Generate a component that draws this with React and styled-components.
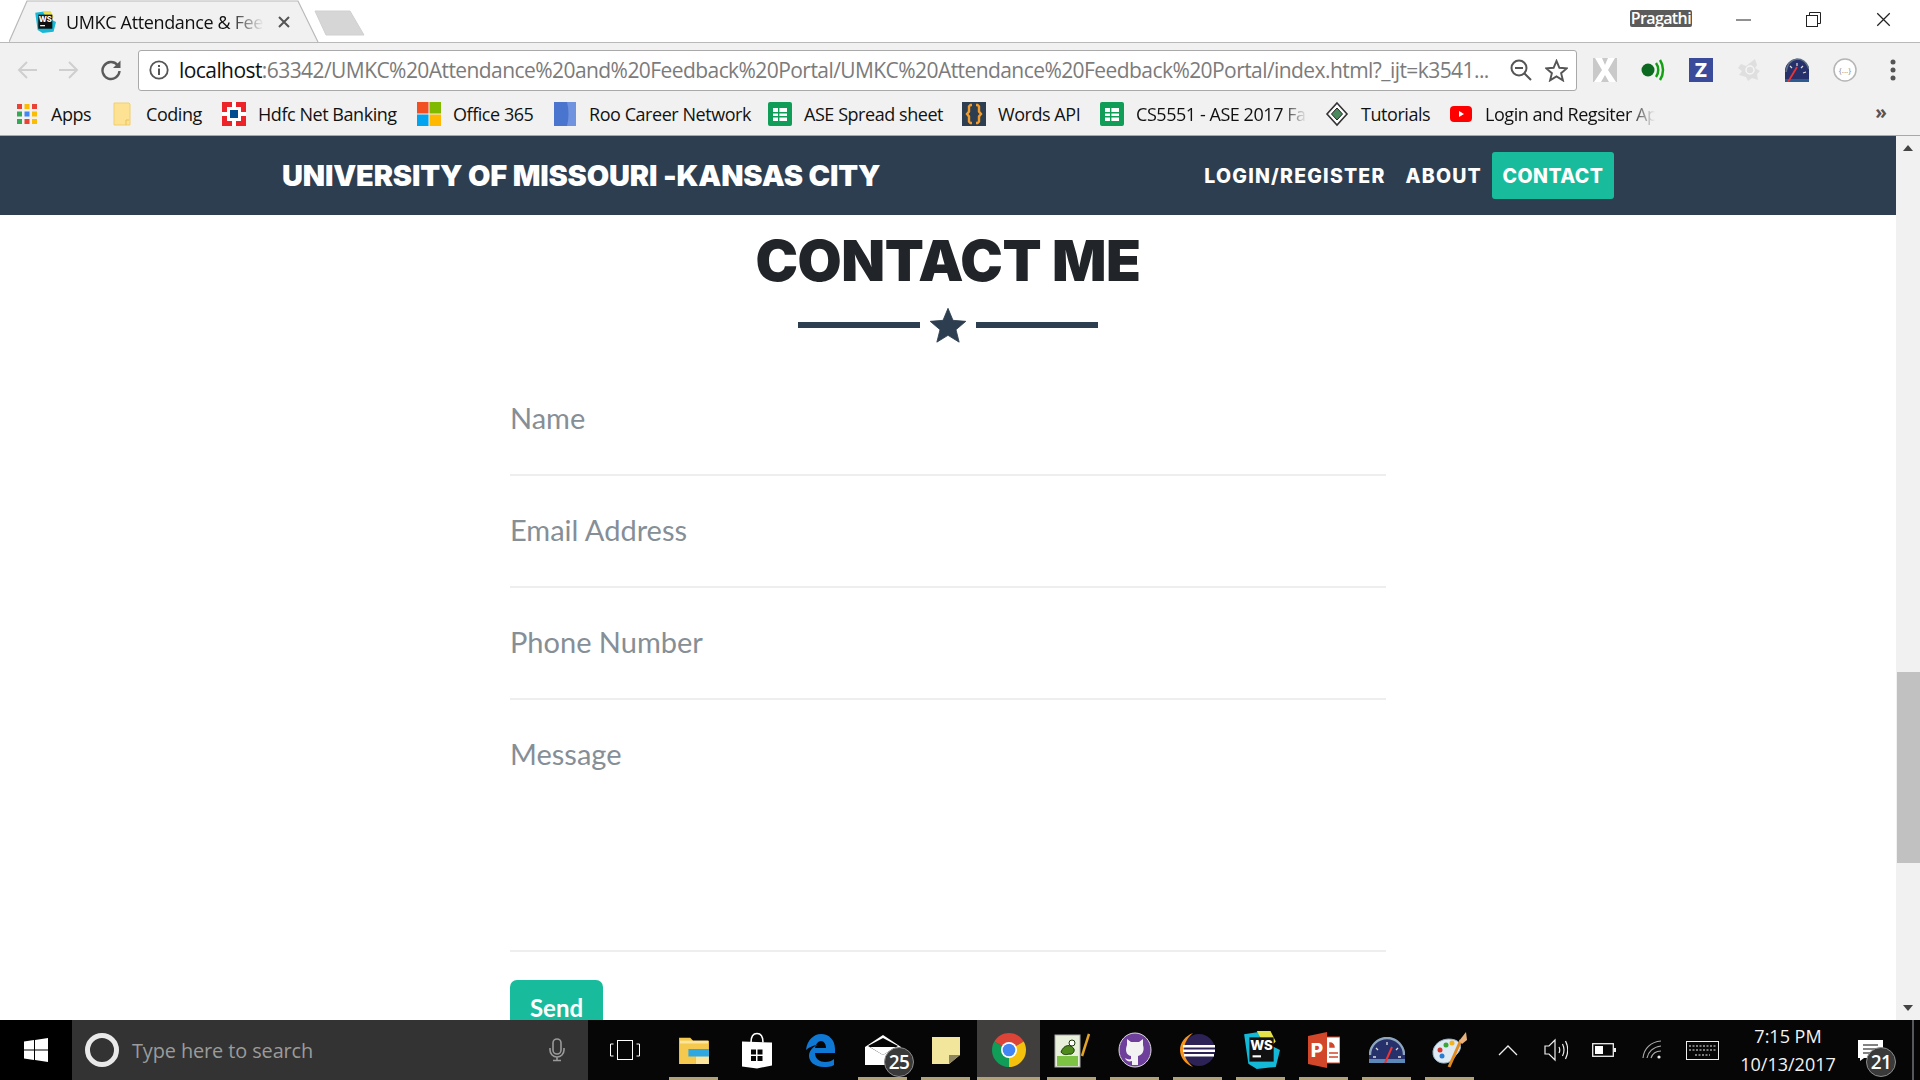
import React from "react";
import styled, { createGlobalStyle } from "styled-components";

const Global = createGlobalStyle`
  html, body { margin: 0; padding: 0; height: 100%; overflow: hidden; background: #fff; }
  * { box-sizing: border-box; }
`;

const UI = `"Open Sans", "Noto Sans", sans-serif`;
const HEAD = `Inter, "Liberation Sans", sans-serif`;
const BODY = `Lato, "Open Sans", sans-serif`;

const Page = styled.div`
  width: 1920px; height: 1080px; display: flex; flex-direction: column; overflow: hidden;
  font-family: ${UI};
`;

/* ---- title / tab strip ---- */
const TabStrip = styled.div`
  height: 43px; flex: none; display: flex; align-items: flex-start; background: #fff;
  border-bottom: 1px solid #b9b9b9; position: relative;
`;
const Tab = styled.div`
  position: relative; width: 310px; height: 43px; margin-left: 9px; flex: none;
  display: flex; align-items: center; padding: 0 0 0 25px;
`;
const TabShape = styled.svg`
  position: absolute; left: 0; top: 0; width: 310px; height: 43px;
`;
const TabIcon = styled.span`
  position: relative; display: flex; margin-right: 10px;
`;
const TabTitle = styled.span`
  position: relative; font-size: 18px; letter-spacing: -0.35px; color: #111; width: 198px;
  white-space: nowrap; overflow: hidden;
  -webkit-mask-image: linear-gradient(to right, #000 82%, transparent 100%);
  mask-image: linear-gradient(to right, #000 82%, transparent 100%);
`;
const TabClose = styled.span`
  position: relative; display: flex; margin-left: 14px;
`;
const NewTab = styled.svg`
  width: 52px; height: 26px; margin: 10px 0 0 -5px; flex: none;
`;
const StripSpace = styled.div` flex: 1; `;
const Profile = styled.span`
  margin-top: 10px; height: 17px; line-height: 17px; padding: 0 1px; font-size: 16px; letter-spacing: -0.6px;
  color: #fff; background: #5b5b5b; border-radius: 2px; font-weight: 600;
`;
const WinButtons = styled.div`
  display: flex; margin-left: 44px; padding-top: 12px; padding-right: 29px; gap: 55px;
`;

/* ---- toolbar ---- */
const Toolbar = styled.div`
  height: 50px; flex: none; background: #f1f1f1; display: flex; align-items: center;
  padding: 4px 0 0 0;
`;
const NavIcons = styled.div`
  width: 138px; flex: none; display: flex; align-items: center; padding-left: 16px; gap: 20px;
`;
const Omnibox = styled.div`
  width: 1439px; height: 41px; flex: none; background: #fff; border: 1px solid #a9a9a9; border-radius: 3px;
  display: flex; align-items: center; padding: 0 8px 0 10px;
`;
const Url = styled.div`
  flex: 1; margin-left: 10px; font-size: 21px; letter-spacing: -0.57px; white-space: nowrap; overflow: hidden; color: #7b7b7b;
  b { font-weight: 400; color: #111; }
`;
const OmniActions = styled.div` display: flex; align-items: center; gap: 13px; `;
const Extensions = styled.div`
  flex: 1; display: flex; align-items: center; padding-left: 16px; gap: 24px;
`;
const KebabSlot = styled.span` display: flex; margin-left: 9px; `;

/* ---- bookmarks ---- */
const Bookmarks = styled.div`
  height: 43px; flex: none; background: #f1f1f1; display: flex; align-items: center; padding-left: 15px;
  border-bottom: 1px solid #a8a8a8;
`;
const Bookmark = styled.div`
  width: ${(p) => p.$w}px; flex: none; display: flex; align-items: center; gap: 12px;
  font-size: 18px; letter-spacing: -0.45px; color: #111; white-space: nowrap;
`;
const BookmarkIcon = styled.span`
  width: 24px; height: 24px; flex: none; display: flex; align-items: center; justify-content: center;
`;
const BookmarkText = styled.span`
  ${(p) => p.$fade && `
    width: ${p.$fade}px; overflow: hidden;
    -webkit-mask-image: linear-gradient(to right, #000 85%, transparent 100%);
    mask-image: linear-gradient(to right, #000 85%, transparent 100%);
  `}
`;
const More = styled.span`
  margin-left: auto; margin-right: 33px; font-size: 19px; line-height: 1; color: #555; font-weight: 700; margin-top: -3px;
`;

/* ---- viewport ---- */
const Viewport = styled.div` flex: 1; min-height: 0; display: flex; `;
const Site = styled.div` flex: 1; min-width: 0; overflow: hidden; display: flex; flex-direction: column; `;
const Navbar = styled.nav`
  height: 79px; flex: none; background: #2c3e50; display: flex; justify-content: center;
`;
const NavInner = styled.div`
  width: 1332px; display: flex; align-items: center; justify-content: space-between;
`;
const Brand = styled.span`
  font-family: ${HEAD}; font-weight: 900; font-size: 29px; letter-spacing: -0.17px; color: #fff; white-space: nowrap;
`;
const NavLinks = styled.div` display: flex; align-items: center; `;
const NavLink = styled.a`
  font-family: ${HEAD}; font-weight: 800; font-size: 19.5px; letter-spacing: 1.2px; color: #fff; white-space: nowrap;
  margin-left: ${(p) => p.$ml || 0}px;
  ${(p) => p.$active && `
    background: #18bc9c; height: 47px; width: 122px; border-radius: 3px; letter-spacing: 0.45px;
    display: flex; align-items: center; justify-content: center;
  `}
`;
const Section = styled.main`
  flex: 1; min-height: 0; display: flex; flex-direction: column; align-items: center; background: #fff;
`;
const Heading = styled.h2`
  margin: 0; padding-top: 12px; font-family: ${HEAD}; font-weight: 900; font-size: 57px; line-height: 68px; letter-spacing: -0.45px; color: #212529;
  white-space: nowrap;
`;
const Divider = styled.div`
  margin-top: 12px; height: 36px; display: flex; align-items: center; gap: 8px; flex: none;
`;
const DividerLine = styled.span`
  width: 122px; height: 6px; background: #2c3e50; display: block;
`;
const Form = styled.form` width: 876px; flex: none; margin-top: 21px; `;
const Field = styled.div`
  height: ${(p) => p.$h}px; border-bottom: 2px solid #eeeeee; padding-top: 36px;
`;
const FieldLabel = styled.label`
  display: block; font-family: ${BODY}; font-size: 29px; line-height: 36px; color: #868e96;
`;
const SendButton = styled.button`
  margin-top: 28px; width: 93px; height: 60px; border: 0; border-radius: 7px; background: #18bc9c; color: #fff;
  font-family: ${BODY}; font-weight: 700; font-size: 24px; display: block; padding: 0 0 5px;
`;

const Scrollbar = styled.div`
  width: 24px; flex: none; background: #f1f1f1; display: flex; flex-direction: column; align-items: stretch;
`;
const ScrollArrow = styled.div`
  height: 24px; flex: none; display: flex; align-items: center; justify-content: center;
`;
const ScrollTrack = styled.div` flex: 1; padding: 512px 0 0 1px; `;
const ScrollThumb = styled.div` width: 23px; height: 191px; background: #c1c1c1; `;

/* ---- taskbar ---- */
const Taskbar = styled.div`
  height: 60px; flex: none; background: #060606; display: flex; align-items: stretch; color: #fff;
`;
const StartButton = styled.div`
  width: 72px; flex: none; display: flex; align-items: center; justify-content: center; background: #000;
`;
const SearchBox = styled.div`
  width: 516px; flex: none; background: #333333; display: flex; align-items: center; padding: 0 22px 0 12px;
`;
const SearchText = styled.span`
  flex: 1; margin-left: 12px; font-size: 19.9px; letter-spacing: -0.1px; color: #9b9b9b; white-space: nowrap;
`;
const TaskView = styled.div`
  width: 74px; flex: none; display: flex; align-items: center; justify-content: center;
`;
const Apps = styled.div` display: flex; flex: none; `;
const AppButton = styled.div`
  position: relative; width: 63px; flex: none; display: flex; align-items: center; justify-content: center;
  background: ${(p) => (p.$active ? "#413f3d" : "transparent")};
  ${(p) => p.$open && `
    &::after {
      content: ""; position: absolute; bottom: 0; height: 3px; background: #b1a27a;
      left: ${p.$active ? 0 : 7}px; right: ${p.$active ? 0 : 7}px;
    }
  `}
`;
const Badge = styled.span`
  position: absolute; left: ${(p) => p.$l}px; top: 27px; width: 30px; height: 30px; border-radius: 50%;
  background: #3a3a3a; border: 1px solid #8c8c8c; color: #fff; font-size: 19px; font-weight: 600;
  display: flex; align-items: center; justify-content: center; letter-spacing: -0.5px;
`;
const Tray = styled.div`
  flex: 1; display: flex; align-items: center; padding-left: 3px;
`;
const TrayIcon = styled.div`
  width: ${(p) => p.$w}px; flex: none; display: flex; align-items: center; justify-content: center;
`;
const Clock = styled.div`
  width: 120px; flex: none; text-align: center; font-size: 18px; line-height: 28px; color: #f3f3f3; white-space: nowrap;
`;
const Notify = styled.div`
  position: relative; flex: 1; height: 100%; display: flex; align-items: center; padding-left: 10px;
`;
const DesktopEdge = styled.div` width: 2px; flex: none; background: #55585a; margin: 0 6px; `;

/* ---- icons ---- */
const Apps9 = () => (
  <svg width="20" height="20" viewBox="0 0 20 20">
    {[["#ea4335","#fbbc05","#ea4335"],["#34a853","#4285f4","#fbbc05"],["#34a853","#ea4335","#fbbc05"]].map((row, y) =>
      row.map((c, x) => <rect key={`${x}${y}`} x={x * 7.5} y={y * 7.5} width="5" height="5" fill={c} />))}
  </svg>
);
const Folder = () => (
  <svg width="18" height="24" viewBox="0 0 18 24">
    <path d="M1 1h15l1 1v21H1z" fill="#fde293" stroke="#f0cf6e" />
    <path d="M13 23v-5h3" fill="none" stroke="#e5c25d" />
  </svg>
);
const Hdfc = () => (
  <svg width="24" height="24" viewBox="0 0 24 24">
    <rect width="24" height="24" fill="#ed232a" />
    <rect x="5" y="5" width="14" height="14" fill="#fff" />
    <rect x="8" y="8" width="8" height="8" fill="#004c8f" />
    <path d="M10 0h4v5h-4zM10 19h4v5h-4zM0 10h5v4H0zM19 10h5v4h-5z" fill="#fff" />
  </svg>
);
const Office = () => (
  <svg width="24" height="24" viewBox="0 0 24 24">
    <rect width="11.5" height="11.5" fill="#f25022" />
    <rect x="12.5" width="11.5" height="11.5" fill="#7fba00" />
    <rect y="12.5" width="11.5" height="11.5" fill="#00a4ef" />
    <rect x="12.5" y="12.5" width="11.5" height="11.5" fill="#ffb900" />
  </svg>
);
const Roo = () => (
  <svg width="22" height="24" viewBox="0 0 22 24">
    <rect width="22" height="24" fill="#4a75cf" />
    <path d="M13 0h9v24h-9c2-8 2-16 0-24z" fill="#6f93de" />
  </svg>
);
const Sheet = () => (
  <svg width="24" height="24" viewBox="0 0 24 24">
    <rect width="24" height="24" rx="2" fill="#0f9d58" />
    <rect x="5" y="6" width="14" height="13" fill="#fff" />
    <path d="M5 10h14v1.4H5zM5 14h14v1.4H5zM10 6h1.4v13H10z" fill="#0f9d58" />
  </svg>
);
const Braces = () => (
  <svg width="24" height="24" viewBox="0 0 24 24">
    <rect width="24" height="24" fill="#2c3e50" />
    <path d="M10 3H8.5L7 4.5v5L5 12l2 2.500v5L8.500 21H10M14 3h1.500L17 4.500v5l2 2.500-2 2.500v5L15.500 21H14" fill="none" stroke="#f39c2b" strokeWidth="2.400" />
  </svg>
);
const Diamond = () => (
  <svg width="24" height="26" viewBox="0 0 24 26">
    <path d="M12 2l10 11-10 11L2 13z" fill="#fff" stroke="#333" strokeWidth="1.600" />
    <path d="M12 7l5.500 6-5.500 6-5.500-6z" fill="#4a8a5c" stroke="#222" />
  </svg>
);
const Youtube = () => (
  <svg width="22" height="16" viewBox="0 0 22 16">
    <rect width="22" height="16" rx="4" fill="#f00" />
    <path d="M9 5l5 3-5 3z" fill="#fff" />
  </svg>
);
const WsLogo = ({ s = 22 }) => (
  <svg width={s} height={s} viewBox="0 0 36 36">
    <path d="M2 3l20-3 6 4-4 8 12 6-4 16-18 2-8-5z" fill="#13b9d6" />
    <path d="M14 0h13l5 10-8 8z" fill="#e6e04a" />
    <rect x="7" y="6" width="23" height="23" fill="#111" />
    <text x="18.500" y="18" textAnchor="middle" fontSize="12.500" fontWeight="800" fill="#fff" fontFamily="Inter, sans-serif">WS</text>
    <rect x="10" y="23" width="8" height="2" fill="#fff" />
  </svg>
);
const Close = ({ s = 12, c = "#555", w = 2 }) => (
  <svg width={s} height={s} viewBox="0 0 12 12"><path d="M1 1l10 10M11 1L1 11" stroke={c} strokeWidth={w} fill="none" /></svg>
);
const ArrowSvg = styled.svg`
  transform: ${(p) => (p.$right ? "scaleX(-1)" : "none")};
`;
const Arrow = ({ right }) => (
  <ArrowSvg $right={right} width="22" height="20" viewBox="0 0 22 20">
    <path d="M21 10H3M11 2l-8 8 8 8" fill="none" stroke="#cfcfcf" strokeWidth="2" />
  </ArrowSvg>
);
const Reload = () => (
  <svg width="22" height="22" viewBox="0 0 22 22">
    <path d="M17.500 6A8.500 8.500 0 1 0 19.500 12" fill="none" stroke="#5a5a5a" strokeWidth="2.400" />
    <path d="M20.500 1.500v7.500H13z" fill="#5a5a5a" />
  </svg>
);
const Info = () => (
  <svg width="20" height="20" viewBox="0 0 20 20">
    <circle cx="10" cy="10" r="8.700" fill="none" stroke="#555" strokeWidth="1.800" />
    <rect x="9" y="8.500" width="2" height="6.500" fill="#555" />
    <rect x="9" y="5" width="2" height="2" fill="#555" />
  </svg>
);
const ZoomOut = () => (
  <svg width="22" height="22" viewBox="0 0 22 22">
    <circle cx="9" cy="9" r="7.500" fill="none" stroke="#555" strokeWidth="2" />
    <path d="M5 9h8M14.500 14.500l6.500 6.500" stroke="#555" strokeWidth="2" fill="none" />
  </svg>
);
const Star = ({ s = 23, fill = "none", stroke = "#555", sw = 2 }) => (
  <svg width={s} height={s} viewBox="0 0 24 24">
    <path d="M12 2l3 7.200 7.700.6-5.900 5 1.900 7.500L12 18.200 5.300 22.300l1.900-7.500-5.900-5L9 9.200z" fill={fill} stroke={stroke} strokeWidth={sw} strokeLinejoin="miter" />
  </svg>
);
const ExtX = () => (
  <svg width="24" height="24" viewBox="0 0 24 24">
    <rect width="24" height="24" fill="#c9c9c9" />
    <path d="M2 0h7l3 7 3-7h7l-7 12 8 12h-7l-4-7-4 7H1l8-12z" fill="#fff" />
  </svg>
);
const ExtDot = () => (
  <svg width="24" height="24" viewBox="0 0 24 24">
    <circle cx="7" cy="12" r="6.500" fill="#0b6a1f" />
    <path d="M15 5c3 4 3 10 0 14M19 2c4 6 4 14 0 20" fill="none" stroke="#11a111" strokeWidth="2.500" />
  </svg>
);
const ExtZ = () => (
  <svg width="24" height="24" viewBox="0 0 24 24">
    <rect width="24" height="24" fill="#3a4b9b" />
    <text x="12" y="19" textAnchor="middle" fontSize="19" fontWeight="800" fill="#fff" fontFamily="Inter, sans-serif">Z</text>
  </svg>
);
const ExtAvast = () => (
  <svg width="24" height="24" viewBox="0 0 24 24">
    <path d="M4 6l5 2 9-7 2 6-2 3 5 3-3 3 1 6-6-2-4 3-2-4-7-2 3-4-4-3z" fill="#dfdfdf" />
    <circle cx="13" cy="12" r="4" fill="none" stroke="#f5f5f5" strokeWidth="1.500" />
  </svg>
);
const Gauge = ({ s = 24 }) => (
  <svg width={s} height={s} viewBox="0 0 24 24">
    <path d="M0 24V12A12 12 0 0 1 12 1c6 0 10 4 12 10v13z" fill="#26306a" />
    <path d="M1 14C2 6 6 2 12 1c6 0 10 4 12 10" fill="none" stroke="#5c6f86" strokeWidth="1.600" />
    <path d="M0 24h24v-3H0z" fill="#2b5c8f" />
    <path d="M3 24l9-15" stroke="#e33" strokeWidth="1.800" />
    <path d="M5 8l2 2M12 5v3M18 8l-2 2M21 14l-3 1" stroke="#ddd" strokeWidth="1.200" />
  </svg>
);
const ExtJson = () => (
  <svg width="24" height="24" viewBox="0 0 24 24">
    <circle cx="12" cy="12" r="11" fill="#fff" stroke="#b5b5b5" strokeWidth="1.500" />
    <text x="12" y="15" textAnchor="middle" fontSize="8" fill="#888" fontFamily="Open Sans, sans-serif">{"{...}"}</text>
  </svg>
);
const Kebab = () => (
  <svg width="6" height="22" viewBox="0 0 6 22">
    <circle cx="3" cy="3" r="2.500" fill="#555" /><circle cx="3" cy="11" r="2.500" fill="#555" /><circle cx="3" cy="19" r="2.500" fill="#555" />
  </svg>
);
const WinLogo = () => (
  <svg width="24" height="24" viewBox="0 0 24 24">
    <path d="M0 3.500l10-1.400v9.400H0zM11 2l13-2v11.500H11zM0 12.500h10v9.400L0 20.500zM11 12.500h13V24l-13-2z" fill="#fff" />
  </svg>
);
const Cortana = () => (
  <svg width="36" height="36" viewBox="0 0 36 36">
    <circle cx="18" cy="18" r="14.500" fill="none" stroke="#e9e9e9" strokeWidth="5" />
  </svg>
);
const Mic = () => (
  <svg width="18" height="24" viewBox="0 0 18 24">
    <rect x="5" y="1" width="8" height="15" rx="4" fill="none" stroke="#9a9a9a" strokeWidth="1.600" />
    <path d="M2 10v2a7 7 0 0 0 14 0v-2M9 19v3M5 22.500h8" fill="none" stroke="#9a9a9a" strokeWidth="1.600" />
  </svg>
);
const TaskViewIcon = () => (
  <svg width="30" height="20" viewBox="0 0 30 20">
    <rect x="7.500" y="0.500" width="15" height="19" fill="none" stroke="#fff" />
    <path d="M3.500 4H.500v12h3M26.500 4h3v12h-3" fill="none" stroke="#fff" />
  </svg>
);
const Explorer = () => (
  <svg width="32" height="28" viewBox="0 0 32 30">
    <path d="M0 2h12l3 3h17v25H0z" fill="#f5c94e" />
    <path d="M1 5h30v3H1z" fill="#fde59c" />
    <path d="M10 14h22v16H18v-8h-8z" fill="#2fa7e0" />
    <path d="M18 22h14v8H18z" fill="#fde59c" />
  </svg>
);
const Store = () => (
  <svg width="32" height="37" viewBox="0 0 32 36">
    <path d="M10 10C10 2 14 1 16 1s6 1 6 9" fill="none" stroke="#fff" strokeWidth="1.600" />
    <path d="M1 9l30 1v23l-15 3-15-2z" fill="#fff" />
    <path d="M10 17h5v5h-5zM16.500 17h5v5h-5zM10 23.500h5v5h-5zM16.500 23.500h5v5h-5z" fill="#060606" />
  </svg>
);
const Edge = () => (
  <svg width="30" height="33" viewBox="0 0 30 33">
    <path d="M1 16C2 6 9 0 16 0c8 0 14 6 14 15v4H10c0 6 5 9 10 9 4 0 7-1 9-3v6c-3 2-7 2-10 2C9 33 4 27 4 22c0-6 5-10 9-11-4 0-9 2-12 5zm9-2h11c0-4-2-7-5-7s-5 3-6 7z" fill="#0f78d4" />
  </svg>
);
const Mail = () => (
  <svg width="36" height="30" viewBox="0 0 36 30">
    <path d="M0 12L18 0l18 12v18H0z" fill="#fff" />
    <path d="M3 11L18 3l15 8-15 9z" fill="#060606" />
    <path d="M5 12h26l-13 8z" fill="#fff" />
  </svg>
);
const Sticky = () => (
  <svg width="28" height="27" viewBox="0 0 28 36" preserveAspectRatio="none">
    <path d="M0 0h28v24L17 36H0z" fill="#f2e69c" />
    <path d="M28 24L17 36V24z" fill="#8d8560" />
  </svg>
);
const Chrome = () => (
  <svg width="34" height="34" viewBox="0 0 34 34">
    <path d="M17 17L2.300 8.500A17 17 0 0 1 31.700 8.500z" fill="#db4437" />
    <path d="M17 17L31.700 8.500A17 17 0 0 1 17 34z" fill="#f4c20d" />
    <path d="M17 17L17 34A17 17 0 0 1 2.300 8.500z" fill="#0f9d58" />
    <circle cx="17" cy="17" r="8" fill="#fff" />
    <circle cx="17" cy="17" r="6.300" fill="#4285f4" />
  </svg>
);
const NotepadPP = () => (
  <svg width="36" height="36" viewBox="0 0 36 36">
    <rect x="1" y="3" width="25" height="32" fill="#e8f0dc" stroke="#aaa" />
    <rect x="3" y="24" width="21" height="10" fill="#7dc242" />
    <path d="M7 20c3-8 10-8 13-3 1 3-2 6-5 5-3 1-6 1-8-2z" fill="#4f8a1c" stroke="#1d3b0b" />
    <circle cx="18" cy="11" r="3" fill="#fff" stroke="#1d3b0b" />
    <path d="M28 24L35 2" stroke="#e1a32a" strokeWidth="2.500" />
  </svg>
);
const Github = () => (
  <svg width="34" height="36" viewBox="0 0 34 36">
    <ellipse cx="17" cy="18" rx="16" ry="17" fill="#6e3f9b" stroke="#ddd" />
    <path d="M9 7l4 3h8l4-3v6c2 6-1 10-5 11v9h-6v-4c-3 1-6 0-7-3 2 1 4 2 6 1v-3C8 23 7 18 9 13z" fill="#f2f2f2" />
  </svg>
);
const Eclipse = () => (
  <svg width="36" height="36" viewBox="0 0 36 36">
    <circle cx="19" cy="18" r="16" fill="#2c2255" />
    <path d="M13 1C5 4 0 11 0 18s5 14 13 17C7 30 4 24 4 18S7 6 13 1z" fill="#f7941e" />
    <path d="M3 13h32v2.500H3zM3 17.500h32V20H3zM4 22h30v2.500H4z" fill="#fff" />
  </svg>
);
const Ppt = () => (
  <svg width="32" height="36" viewBox="0 0 32 36">
    <rect x="14" y="5" width="18" height="26" fill="#fff" stroke="#d2472a" />
    <path d="M0 4l19-4v36L0 32z" fill="#d2472a" />
    <text x="9" y="25" textAnchor="middle" fontSize="19" fontWeight="800" fill="#fff" fontFamily="Inter, sans-serif">P</text>
    <path d="M22 11a4 4 0 0 1 4 4h-4zM21 21h9M21 25h9" stroke="#d2472a" fill="#d2472a" strokeWidth="1.500" />
  </svg>
);
const TaskGauge = () => (
  <svg width="36" height="26" viewBox="0 0 36 26">
    <path d="M0 26V18A18 18 0 0 1 36 18v8z" fill="#26306a" />
    <path d="M1 18A17 17 0 0 1 35 18" fill="none" stroke="#8da6bd" strokeWidth="2.400" />
    <path d="M0 26h36v-4H0z" fill="#5b88b5" />
    <path d="M16 26l7-16" stroke="#e33" strokeWidth="2" />
    <path d="M7 11l2 2M18 5v3M29 11l-2 2M32 20l-3 0M4 20h3" stroke="#ddd" strokeWidth="1.300" />
  </svg>
);
const Palette = () => (
  <svg width="36" height="36" viewBox="0 0 36 36">
    <path d="M1 19C3 9 14 5 23 8c8 3 6 10 2 14-3 3-3 6-8 8-6 3-17 0-16-11z" fill="#dde9f3" stroke="#9db5c8" />
    <circle cx="8" cy="18" r="2.500" fill="#d9362b" />
    <circle cx="14" cy="13" r="2.500" fill="#3aa53a" />
    <circle cx="20" cy="11" r="2.500" fill="#f3b11f" />
    <circle cx="10" cy="24" r="2.500" fill="#2a7bd1" />
    <path d="M17 35L29 8" stroke="#e08a1e" strokeWidth="3" />
    <path d="M27 9l7-9 1 8-5 4z" fill="#e9b27a" />
  </svg>
);
const Caret = () => (
  <svg width="20" height="12" viewBox="0 0 20 12"><path d="M1 11l9-9 9 9" fill="none" stroke="#eee" strokeWidth="1.300" /></svg>
);
const Volume = () => (
  <svg width="24" height="24" viewBox="0 0 24 24" fill="none" stroke="#eee" strokeWidth="1.200">
    <path d="M1 8h4l6-6v20l-6-6H1zM15 9c1 2 1 4 0 6M18.500 6c2 4 2 8 0 12M21.500 3c3 6 3 12 0 18" />
  </svg>
);
const Battery = () => (
  <svg width="24" height="14" viewBox="0 0 24 14">
    <rect x="0.700" y="0.700" width="20.600" height="12.600" fill="none" stroke="#eee" strokeWidth="1.300" />
    <rect x="3" y="3" width="8" height="8" fill="#fff" /><rect x="22" y="5" width="2" height="4" fill="#eee" />
  </svg>
);
const Wifi = () => (
  <svg width="20" height="20" viewBox="0 0 20 20" fill="none" stroke="#aaa" strokeWidth="1.200">
    <path d="M1 18C2 8 9 2 19 1M5 18c1-6 6-11 14-12M9 18c1-3 4-7 10-7" />
    <circle cx="17" cy="17" r="1.600" fill="#eee" stroke="none" />
  </svg>
);
const Keyboard = () => (
  <svg width="33" height="19" viewBox="0 0 33 19" fill="none" stroke="#eee">
    <rect x="0.500" y="0.500" width="32" height="18" />
    <path d="M3 5h27M3 9h27M9 14h15" strokeDasharray="2 1.500" />
  </svg>
);
const Bubble = () => (
  <svg width="25" height="21" viewBox="0 0 25 21">
    <path d="M0 0h25v18H6l-4 3v-3H0z" fill="#fff" />
    <path d="M5 5h15M5 9h15M5 13h15" stroke="#060606" strokeWidth="1.200" />
  </svg>
);

const bookmarks = [
  { w: 95, t: "Apps", i: <Apps9 /> },
  { w: 112, t: "Coding", i: <Folder /> },
  { w: 195, t: "Hdfc Net Banking", i: <Hdfc /> },
  { w: 136, t: "Office 365", i: <Office /> },
  { w: 215, t: "Roo Career Network", i: <Roo /> },
  { w: 194, t: "ASE Spread sheet", i: <Sheet /> },
  { w: 138, t: "Words API", i: <Braces /> },
  { w: 225, t: "CS5551 - ASE 2017 Fall", i: <Sheet />, fade: 171 },
  { w: 124, t: "Tutorials", i: <Diamond /> },
  { w: 208, t: "Login and Regsiter App", i: <Youtube />, fade: 170 },
];

const apps = [
  { i: <Explorer />, open: true },
  { i: <Store /> },
  { i: <Edge /> },
  { i: <Mail />, open: true, badge: "25", l: 33 },
  { i: <Sticky />, open: true },
  { i: <Chrome />, open: true, active: true },
  { i: <NotepadPP />, open: true },
  { i: <Github />, open: true },
  { i: <Eclipse />, open: true },
  { i: <WsLogo s={38} />, open: true },
  { i: <Ppt />, open: true },
  { i: <TaskGauge />, open: true },
  { i: <Palette />, open: true },
];

export default function App() {
  return (
    <Page>
      <Global />
      <TabStrip>
        <Tab>
          <TabShape viewBox="0 0 310 43">
            <path d="M0 42L18 1h271l20 41" fill="#f1f1f1" stroke="#b9b9b9" strokeWidth="1.200" />
          </TabShape>
          <TabIcon><WsLogo /></TabIcon>
          <TabTitle>UMKC Attendance &amp; Feedback</TabTitle>
          <TabClose><Close /></TabClose>
        </Tab>
        <NewTab viewBox="0 0 52 26">
          <path d="M1 1h35l14 24H12z" fill="#d6d6d6" stroke="#d0d0d0" strokeLinejoin="round" />
        </NewTab>
        <StripSpace />
        <Profile>Pragathi</Profile>
        <WinButtons>
          <svg width="15" height="15" viewBox="0 0 15 15"><path d="M0 8h15" stroke="#222" /></svg>
          <svg width="15" height="15" viewBox="0 0 15 15" fill="none" stroke="#222"><rect x="0.500" y="3.500" width="11" height="11" /><path d="M3.500 3.500v-3h11v11h-3" /></svg>
          <Close s={15} c="#222" w={1} />
        </WinButtons>
      </TabStrip>
      <Toolbar>
        <NavIcons>
          <Arrow />
          <Arrow right />
          <Reload />
        </NavIcons>
        <Omnibox>
          <Info />
          <Url><b>localhost</b>:63342/UMKC%20Attendance%20and%20Feedback%20Portal/UMKC%20Attendance%20Feedback%20Portal/index.html?_ijt=k3541...</Url>
          <OmniActions>
            <ZoomOut />
            <Star />
          </OmniActions>
        </Omnibox>
        <Extensions>
          <ExtX /><ExtDot /><ExtZ /><ExtAvast /><Gauge /><ExtJson /><KebabSlot><Kebab /></KebabSlot>
        </Extensions>
      </Toolbar>
      <Bookmarks>
        {bookmarks.map((b) => (
          <Bookmark key={b.t} $w={b.w}>
            <BookmarkIcon>{b.i}</BookmarkIcon>
            <BookmarkText $fade={b.fade}>{b.t}</BookmarkText>
          </Bookmark>
        ))}
        <More>»</More>
      </Bookmarks>
      <Viewport>
        <Site>
          <Navbar>
            <NavInner>
              <Brand>UNIVERSITY OF MISSOURI -KANSAS CITY</Brand>
              <NavLinks>
                <NavLink>LOGIN/REGISTER</NavLink>
                <NavLink $ml={20}>ABOUT</NavLink>
                <NavLink $ml={10} $active>CONTACT</NavLink>
              </NavLinks>
            </NavInner>
          </Navbar>
          <Section>
            <Heading>CONTACT ME</Heading>
            <Divider>
              <DividerLine />
              <Star s={40} fill="#2c3e50" stroke="#2c3e50" sw={0.500} />
              <DividerLine />
            </Divider>
            <Form>
              <Field $h={112}><FieldLabel>Name</FieldLabel></Field>
              <Field $h={112}><FieldLabel>Email Address</FieldLabel></Field>
              <Field $h={112}><FieldLabel>Phone Number</FieldLabel></Field>
              <Field $h={252}><FieldLabel>Message</FieldLabel></Field>
              <SendButton type="button">Send</SendButton>
            </Form>
          </Section>
        </Site>
        <Scrollbar>
          <ScrollArrow><svg width="12" height="8" viewBox="0 0 12 8"><path d="M6 1l5 6H1z" fill="#444" /></svg></ScrollArrow>
          <ScrollTrack><ScrollThumb /></ScrollTrack>
          <ScrollArrow><svg width="12" height="8" viewBox="0 0 12 8"><path d="M6 7L1 1h10z" fill="#444" /></svg></ScrollArrow>
        </Scrollbar>
      </Viewport>
      <Taskbar>
        <StartButton><WinLogo /></StartButton>
        <SearchBox>
          <Cortana />
          <SearchText>Type here to search</SearchText>
          <Mic />
        </SearchBox>
        <TaskView><TaskViewIcon /></TaskView>
        <Apps>
          {apps.map((a, n) => (
            <AppButton key={n} $open={a.open} $active={a.active}>
              {a.i}
              {a.badge && <Badge $l={a.l}>{a.badge}</Badge>}
            </AppButton>
          ))}
        </Apps>
        <Tray>
          <TrayIcon $w={48}><Caret /></TrayIcon>
          <TrayIcon $w={48}><Volume /></TrayIcon>
          <TrayIcon $w={48}><Battery /></TrayIcon>
          <TrayIcon $w={48}><Wifi /></TrayIcon>
          <TrayIcon $w={52}><Keyboard /></TrayIcon>
          <Clock>7:15 PM<br />10/13/2017</Clock>
          <Notify>
            <Bubble />
            <Badge $l={18}>21</Badge>
          </Notify>
        </Tray>
        <DesktopEdge />
      </Taskbar>
    </Page>
  );
}
